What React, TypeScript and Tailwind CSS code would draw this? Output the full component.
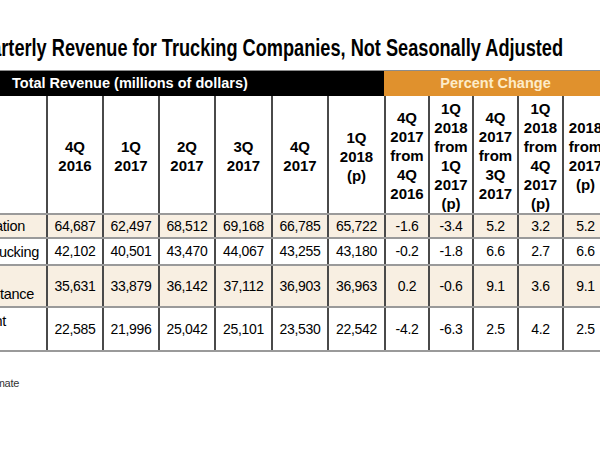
const cols = "grid grid-cols-[246px_56px_56px_56px_57px_56px_57px_44px_44px_45px_45px_45px]"

const revHeads = [
  ["4Q", "2016"],
  ["1Q", "2017"],
  ["2Q", "2017"],
  ["3Q", "2017"],
  ["4Q", "2017"],
  ["1Q", "2018", "(p)"],
]

const pctHeads = [
  ["4Q", "2017", "from", "4Q", "2016"],
  ["1Q", "2018", "from", "1Q", "2017", "(p)"],
  ["4Q", "2017", "from", "3Q", "2017"],
  ["1Q", "2018", "from", "4Q", "2017", "(p)"],
  ["2018", "from", "2017", "(p)"],
]

const rows = [
  {
    label: ["Truck Transportation"],
    pads: ["pr-[21px]"],
    h: "h-[24px]",
    bg: "bg-[#f8efe2]",
    vals: ["64,687", "62,497", "68,512", "69,168", "66,785", "65,722", "-1.6", "-3.4", "5.2", "3.2", "5.2"],
  },
  {
    label: ["General Freight Trucking"],
    pads: ["pr-[7px]"],
    h: "h-[27px]",
    bg: "bg-white",
    vals: ["42,102", "40,501", "43,470", "44,067", "43,255", "43,180", "-0.2", "-1.8", "6.6", "2.7", "6.6"],
  },
  {
    label: ["General Freight,", "Long-Distance"],
    pads: ["pr-[60px]", "pr-[12px]"],
    h: "h-[42px]",
    bg: "bg-[#f8efe2]",
    vals: ["35,631", "33,879", "36,142", "37,112", "36,903", "36,963", "0.2", "-0.6", "9.1", "3.6", "9.1"],
  },
  {
    label: ["Specialized Freight", "Trucking"],
    pads: ["pr-[40px]", "pr-[60px]"],
    h: "h-[44px]",
    bg: "bg-white",
    vals: ["22,585", "21,996", "25,042", "25,101", "23,530", "22,542", "-4.2", "-6.3", "2.5", "4.2", "2.5"],
  },
]

const App = () => {
  return (
    <div className="w-[600px] h-[450px] overflow-hidden bg-white font-['Liberation_Sans',Arial,sans-serif] text-black">
      <div className="-ml-[200px] w-[820px]">
        {/* condensed headline: squeeze Liberation Sans, keep right edge fixed */}
        <h1 className="mt-[35px] w-[763px] origin-right scale-x-[0.79] whitespace-nowrap text-right text-[23px] leading-[26px] font-bold">
          Quarterly Revenue for Trucking Companies, Not Seasonally Adjusted
        </h1>

        <div className="mt-[9px] border-t border-[#8c8c8c]">
          <div className={`${cols} h-[25px] text-[14.5px] font-bold`}>
            <div className="col-span-7 flex items-center bg-black pl-[212px] text-white">
              Total Revenue (millions of dollars)
            </div>
            <div className="col-span-5 flex items-center justify-center bg-[#e0912d] text-[#fdecc9]">
              Percent Change
            </div>
          </div>

          <div className={`${cols} h-[119px] border-b-2 border-[#9a9a9a] text-[15px] font-bold leading-[19px]`}>
            <div />
            {revHeads.map((h, i) => (
              <div key={i} className="flex flex-col items-center justify-center border-l-2 border-[#4a4a4a] pt-[3px]">
                {h.map((t, j) => (
                  <span key={j}>{t}</span>
                ))}
              </div>
            ))}
            {pctHeads.map((h, i) => (
              <div key={i} className="flex flex-col items-center justify-center border-l-2 border-[#4a4a4a] pt-[2px]">
                {h.map((t, j) => (
                  <span key={j}>{t}</span>
                ))}
              </div>
            ))}
          </div>

          {rows.map((r, i) => (
            <div key={i} className={`${cols} ${r.h} ${r.bg} border-b-2 border-[#9a9a9a] text-[14px] tracking-[-0.3px]`}>
              <div className="flex flex-col items-end justify-center whitespace-nowrap text-[14.5px] leading-[16px]">
                {r.label.map((t, j) => (
                  <span key={j} className={r.pads[j]}>{t}</span>
                ))}
              </div>
              {r.vals.map((v, j) => (
                <div key={j} className="flex items-center justify-center border-l-2 border-[#4a4a4a]">
                  {v}
                </div>
              ))}
            </div>
          ))}
        </div>

        <div className="mt-[23px] w-[246px] pr-[27px] text-right text-[11px] tracking-[-0.3px] text-[#333]">
          (p) preliminary estimate
        </div>
      </div>
    </div>
  )
}

export default App
